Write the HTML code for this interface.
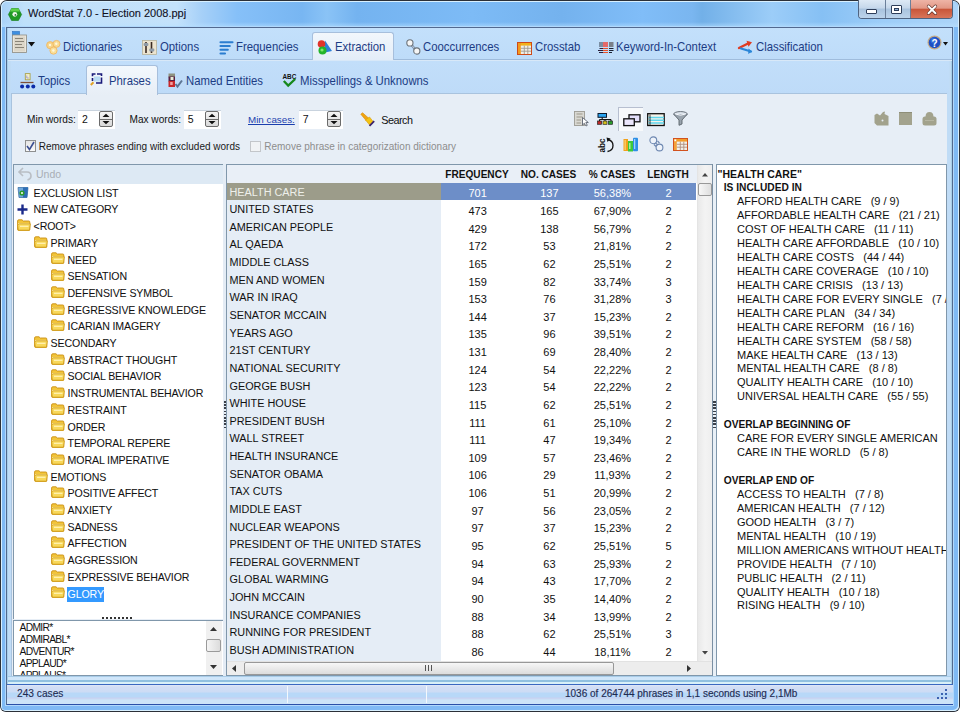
<!DOCTYPE html><html><head><meta charset="utf-8"><style>
*{box-sizing:border-box;margin:0;padding:0}
html,body{width:960px;height:712px;overflow:hidden;background:#fff}
body{position:relative;font-family:"Liberation Sans",sans-serif;}
.a{position:absolute}
.t{position:absolute;white-space:nowrap;line-height:1}
svg{position:absolute;overflow:visible}
</style></head><body>

<div class="a" style="left:0;top:0;width:960px;height:712px;background:#2b3038;border-radius:7px 7px 6px 6px"></div>
<div class="a" style="left:1px;top:1px;width:958px;height:710px;background:#7fbaf5;border-radius:6px 6px 5px 5px;box-shadow:inset 1px 1px 0 #d8f0ff, inset -1px -1px 0 #d8f0ff"></div>
<div class="a" style="left:2px;top:2px;width:956px;height:25px;border-radius:5px 5px 0 0;background:linear-gradient(90deg,#a9d2f8 0px,#bfe0fa 22px,#c4e2fb 175px,#a6d0f8 200px,#86c0f8 235px,#78b6f2 300px,#8ac3f6 325px,#74b3f0 355px,#7dbbf6 470px,#74b2ee 560px,#80bdf8 640px,#7ab6f0 690px,#72b0e8 700px,#9ccdf8 770px,#86c0f4 820px,#9dcdf8 880px,#acd4f8 956px)"></div>
<div class="a" style="left:2px;top:22px;width:956px;height:5px;background:linear-gradient(rgba(180,222,255,0),rgba(185,225,255,0.6))"></div>
<svg style="left:8px;top:7.5px" width="14" height="13" viewBox="0 0 14 13"><polygon points="3.6,0.5 10.4,0.5 13.6,6.5 10.4,12.5 3.6,12.5 0.4,6.5" fill="#1f9a24" stroke="#167a1a" stroke-width="0.6"/><polygon points="3.6,0.5 10.4,0.5 12,3.5 2,3.5" fill="#5fd04a"/><circle cx="6.8" cy="6.3" r="2.4" fill="#eef8e8"/><circle cx="7.4" cy="6.9" r="0.9" fill="#2a6a3a"/></svg>
<div class="t" style="left:28px;top:8px;font-size:11px;color:#10101e;-webkit-text-stroke:0.1px #10101e">WordStat 7.0 - Election 2008.ppj</div>
<div class="a" style="left:858px;top:0;width:95px;height:19px;border:1px solid #4f6380;border-top:none;border-radius:0 0 4px 4px;overflow:hidden;background:#c9dcef"><div class="a" style="left:0;top:0;width:26px;height:18px;background:linear-gradient(#dde9f5,#c5d7ea 45%,#a9c3de 50%,#bcd3ea)"></div><div class="a" style="left:26px;top:0;width:1px;height:18px;background:#6b7f9a"></div><div class="a" style="left:27px;top:0;width:24px;height:18px;background:linear-gradient(#dde9f5,#c5d7ea 45%,#a9c3de 50%,#bcd3ea)"></div><div class="a" style="left:51px;top:0;width:1px;height:18px;background:#6b7f9a"></div><div class="a" style="left:52px;top:0;width:43px;height:18px;background:linear-gradient(#eeb4a6,#e29886 45%,#c9563a 52%,#d8755a)"></div></div>
<div class="a" style="left:866px;top:9px;width:11px;height:5px;background:#fff;border:1px solid #2e3e5a;border-radius:1px"></div>
<div class="a" style="left:891px;top:5px;width:11px;height:9px;background:#fff;border:1px solid #2e3e5a;border-radius:1px"></div>
<div class="a" style="left:894px;top:8px;width:5px;height:3px;background:#8fb0d8;border:1px solid #2e3e5a"></div>
<svg style="left:926.5px;top:4.5px" width="10" height="9.5" viewBox="0 0 10 9.5"><path d="M1.5 1.2 L8.5 8.3 M8.5 1.2 L1.5 8.3" stroke="#5a2a22" stroke-width="3.2" stroke-linecap="round"/><path d="M1.5 1.2 L8.5 8.3 M8.5 1.2 L1.5 8.3" stroke="#fff" stroke-width="2" stroke-linecap="round"/></svg>
<div class="a" style="left:6px;top:27px;width:947px;height:678px;background:#c0dcf6;border:1px solid #52698f;border-bottom:none;box-shadow:0 0 0 1px #b0d8fc"></div>
<div class="a" style="left:7px;top:28px;width:1px;height:677px;background:#a6cfe8"></div>
<div class="a" style="left:951px;top:28px;width:1px;height:677px;background:#a6cfe8"></div>
<div class="a" style="left:8px;top:676px;width:943px;height:8px;background:linear-gradient(#a8cce8 0,#a8cce8 1px,#d0e6fa 1px,#d0e6fa 4px,#90c0e0 4px,#90c0e0 6px,#d8f0f8 6px)"></div>
<div class="a" style="left:8px;top:28px;width:944px;height:31px;background:linear-gradient(#c3e0fb,#bedcf9)"></div>
<div class="a" style="left:8px;top:59px;width:944px;height:1px;background:#9fbcdc"></div>
<div class="a" style="left:8px;top:60px;width:944px;height:1px;background:#d8e8f8"></div>
<div class="a" style="left:11px;top:61px;width:938px;height:33px;background:linear-gradient(#c2defa,#bedbf8)"></div>
<div class="a" style="left:11px;top:93px;width:936px;height:583px;background:#e7eef6;border-left:1px solid #a9c3de;border-top:1px solid #a9c3de"></div>
<div class="a" style="left:312px;top:32px;width:82px;height:28px;background:linear-gradient(#f2f7fc,#e3edf8);border:1px solid #a7bfdc;border-bottom:none;border-radius:3px 3px 0 0"></div>
<div class="t" style="left:63.3px;top:40.6px;font-size:12.4px;color:#1c3c84;transform:scaleX(0.915);transform-origin:0 0">Dictionaries</div>
<div class="t" style="left:159.8px;top:40.6px;font-size:12.4px;color:#1c3c84;transform:scaleX(0.915);transform-origin:0 0">Options</div>
<div class="t" style="left:236.3px;top:40.6px;font-size:12.4px;color:#1c3c84;transform:scaleX(0.915);transform-origin:0 0">Frequencies</div>
<div class="t" style="left:334.8px;top:40.6px;font-size:12.4px;color:#1c3c84;transform:scaleX(0.915);transform-origin:0 0">Extraction</div>
<div class="t" style="left:423.3px;top:40.6px;font-size:12.4px;color:#1c3c84;transform:scaleX(0.915);transform-origin:0 0">Cooccurrences</div>
<div class="t" style="left:534.55px;top:40.6px;font-size:12.4px;color:#1c3c84;transform:scaleX(0.915);transform-origin:0 0">Crosstab</div>
<div class="t" style="left:616.3px;top:40.6px;font-size:12.4px;color:#1c3c84;transform:scaleX(0.915);transform-origin:0 0">Keyword-In-Context</div>
<div class="t" style="left:755.8px;top:40.6px;font-size:12.4px;color:#1c3c84;transform:scaleX(0.915);transform-origin:0 0">Classification</div>
<div class="a" style="left:86px;top:65px;width:72px;height:30px;background:linear-gradient(#f3f8fd,#e7eef6);border:1px solid #a7bfdc;border-bottom:none;border-radius:3px 3px 0 0"></div>
<div class="t" style="left:37.75px;top:74.6px;font-size:12.4px;color:#1c3c84;transform:scaleX(0.915);transform-origin:0 0">Topics</div>
<div class="t" style="left:108.5px;top:74.6px;font-size:12.4px;color:#1c3c84;transform:scaleX(0.915);transform-origin:0 0">Phrases</div>
<div class="t" style="left:185.5px;top:74.6px;font-size:12.4px;color:#1c3c84;transform:scaleX(0.915);transform-origin:0 0">Named Entities</div>
<div class="t" style="left:300px;top:74.6px;font-size:12.4px;color:#1c3c84;transform:scaleX(0.915);transform-origin:0 0">Misspellings &amp; Unknowns</div>
<svg style="left:12px;top:31px" width="16" height="22" viewBox="0 0 16 22"><rect x="0.5" y="0.5" width="7" height="4" fill="#3d8fe0" stroke="#2a6fbf" stroke-width="0.6"/><rect x="0.5" y="4" width="14" height="17.5" fill="#ebe6dc" stroke="#8d8a80" stroke-width="0.8"/><rect x="2" y="5.5" width="11" height="15" fill="#dcd6c8"/><path d="M3 7.5 H11 M3 10.5 H12 M3 13.5 H10 M3 16.5 H12" stroke="#8a8477" stroke-width="1"/></svg>
<svg style="left:28px;top:42px" width="7" height="5" viewBox="0 0 7 5"><path d="M0 0 H7 L3.5 4.5Z" fill="#111"/></svg>
<svg style="left:46px;top:40px" width="15" height="15" viewBox="0 0 15 15"><circle cx="4.2" cy="5.2" r="3.6" fill="#f6d488" stroke="#f1b45c" stroke-width="0.8"/><circle cx="10.5" cy="3.9" r="3.5" fill="#f8dc94" stroke="#f1b45c" stroke-width="0.8"/><circle cx="7.5" cy="10.6" r="3.6" fill="#f9e09a" stroke="#f1b45c" stroke-width="0.8"/><circle cx="4" cy="5" r="1.2" fill="#fff6dc"/><circle cx="10.3" cy="3.7" r="1.2" fill="#fff6dc"/><circle cx="7.4" cy="10.5" r="1.2" fill="#fff6dc"/></svg>
<svg style="left:142px;top:40px" width="15" height="15" viewBox="0 0 15 15"><rect x="0.5" y="0.5" width="14" height="14" fill="#ece4cf" stroke="#b9b39a" stroke-width="0.8"/><path d="M4 2 V13 M9.5 2 V13" stroke="#3a2a22" stroke-width="1.6"/><rect x="1.6" y="3" width="4.8" height="3" rx="1" fill="#8e9aa6"/><rect x="7.3" y="8.5" width="5" height="3" rx="1" fill="#8e9aa6"/></svg>
<svg style="left:220px;top:41px" width="14" height="14" viewBox="0 0 14 14"><path d="M0.5 1.2 H12.5 M0.5 5 H9.8 M0.5 8.8 H7.8 M0.5 12.5 H5" stroke="#2b7dd0" stroke-width="2.1" stroke-linecap="round"/></svg>
<svg style="left:317px;top:40px" width="16" height="15" viewBox="0 0 16 15"><path d="M8 0.5 L15 11 L8 12.5Z" fill="#2a7fd8"/><path d="M8 0.5 L8 12.5 L5.5 11Z" fill="#5fb0f0"/><circle cx="4.5" cy="4" r="3.8" fill="#e0342a"/><circle cx="5.5" cy="10.5" r="4" fill="#22b42a"/><circle cx="5" cy="10" r="1.6" fill="#7cea6a"/></svg>
<svg style="left:406px;top:39px" width="14" height="16" viewBox="0 0 14 16"><path d="M4 4 L10.5 12" stroke="#7d8fa6" stroke-width="2.4"/><path d="M4 4 L10.5 12" stroke="#c9d8e8" stroke-width="0.8"/><circle cx="3.9" cy="3.9" r="3.1" fill="#f6f6f6" stroke="#6c737a" stroke-width="1.1"/><circle cx="10.8" cy="12" r="3.1" fill="#f6f6f6" stroke="#6c737a" stroke-width="1.1"/></svg>
<svg style="left:517px;top:41.5px" width="15" height="13" viewBox="0 0 15 13"><rect x="0.5" y="0.5" width="14" height="12" fill="#f0efe8" stroke="#cf4a18" stroke-width="1"/><rect x="1" y="1" width="13" height="2.6" fill="#f3b21a"/><rect x="1" y="1" width="2.8" height="11" fill="#f39a1c"/><path d="M3.8 6.3 H14 M3.8 9.2 H14 M7.3 3.6 V12 M10.8 3.6 V12" stroke="#a39a90" stroke-width="0.9"/></svg>
<svg style="left:598px;top:42px" width="16" height="12" viewBox="0 0 16 12"><rect x="1" y="0" width="4" height="5" fill="#7b8ea3"/><rect x="5" y="0" width="5" height="5" fill="#e46a6a"/><rect x="11" y="0" width="4.5" height="5" fill="#7a8089"/><path d="M1.5 6.5 H5 M0 8.5 H5 M1 10.5 H5" stroke="#2a1f3a" stroke-width="1.1"/><path d="M5 6.5 H10 M5 8.5 H10 M5 10.5 H10" stroke="#e8522c" stroke-width="1.1"/><path d="M11 6.5 H15.5 M11 8.5 H15.5 M11 10.5 H14" stroke="#1c2233" stroke-width="1.1"/></svg>
<svg style="left:738px;top:40px" width="15" height="15" viewBox="0 0 15 15"><path d="M1 8 L11 3" stroke="#e03c22" stroke-width="2.4" stroke-linecap="round"/><path d="M8.5 0.8 L14 2.2 L10.5 6.8Z" fill="#e03c22"/><path d="M3 8.5 L13 11.5" stroke="#2a86d8" stroke-width="2.2" stroke-linecap="round"/><path d="M10.5 8.5 L14.2 11.6 L10.2 14Z" fill="#2a86d8"/></svg>
<svg style="left:926.5px;top:35px" width="15" height="15" viewBox="0 0 15 15"><circle cx="7.5" cy="7.5" r="7" fill="#c4aa86"/><circle cx="7.5" cy="7.5" r="5.8" fill="#1e4fc4"/><circle cx="6.5" cy="5.5" r="3" fill="#3f7ee8" opacity="0.6"/><text x="7.5" y="11.5" font-family="Liberation Sans" font-weight="bold" font-size="10" fill="#fff" text-anchor="middle">?</text></svg>
<svg style="left:943px;top:41.5px" width="5" height="3.5" viewBox="0 0 5 3.5"><path d="M0 0 H5 L2.5 3.5Z" fill="#111"/></svg>
<svg style="left:20px;top:72.5px" width="16" height="16" viewBox="0 0 16 16"><rect x="5.3" y="0.6" width="4.8" height="6.2" fill="#f3efc9" stroke="#aaa24e" stroke-width="0.9"/><path d="M6.8 2.5 V5 H8.8" stroke="#8f8bd8" stroke-width="0.8" fill="none"/><path d="M0.5 9.5 H13.5" stroke="#7d4f36" stroke-width="1.3"/><circle cx="2.1" cy="13.6" r="2" fill="#0b2aa8"/><circle cx="7.8" cy="13.6" r="2" fill="#0b2aa8"/><circle cx="13.3" cy="13.6" r="2" fill="#0b2aa8"/></svg>
<svg style="left:90px;top:73px" width="13" height="13" viewBox="0 0 13 13"><path d="M2.5 3.2 V1 H5.5 M7 1 H11.5 V3 M11.5 4.5 V10 H6 M2.5 5 V8" stroke="#1a1a7a" stroke-width="1.6" fill="none"/><rect x="4" y="3.5" width="6" height="5" fill="#b9dcf4"/><path d="M0.8 12 L3.5 9.3" stroke="#e2a328" stroke-width="2"/></svg>
<svg style="left:168px;top:73px" width="15" height="15" viewBox="0 0 15 15"><rect x="0.5" y="0.5" width="6.5" height="4" fill="#8e9280"/><rect x="0.5" y="3.5" width="6.5" height="5" fill="#5a2040"/><rect x="2.5" y="4" width="3" height="3" fill="#e8eed8"/><rect x="0.5" y="8" width="6.5" height="6" fill="#c8282a"/><rect x="2.2" y="9" width="2.5" height="3" fill="#f3a0a0"/><path d="M7.5 11 L9.5 13.5 L14 7.5" stroke="#5e7694" stroke-width="2" fill="none"/></svg>
<svg style="left:282px;top:73px" width="15" height="15" viewBox="0 0 15 15"><text x="0.5" y="6.3" font-family="Liberation Sans" font-weight="bold" font-size="6.4" fill="#111">ABC</text><path d="M1.8 8 L6.2 12.6 L13.2 6" stroke="#16881c" stroke-width="2.3" fill="none"/></svg>
<div class="t" style="left:27px;top:114.9px;font-size:10.1px;color:#111">Min words:</div>
<div class="t" style="left:129.5px;top:114.9px;font-size:10.1px;color:#111">Max words:</div>
<div class="t" style="left:248px;top:114.9px;font-size:9.8px;color:#1b3fae;text-decoration:underline">Min cases:</div>
<div class="a" style="left:78px;top:109.5px;width:37px;height:19px;background:#fff;border-top:1px solid #c9d3de"></div>
<div class="t" style="left:82px;top:114px;font-size:10.5px;color:#111">2</div>
<div class="a" style="left:99px;top:111px;width:14px;height:16px;background:linear-gradient(#f4f4f4,#d9d9d9);border:1px solid #6b6b6b;border-radius:2px"></div>
<div class="a" style="left:100px;top:118.5px;width:12px;height:1px;background:#6b6b6b"></div>
<svg style="left:102px;top:113px" width="8" height="12" viewBox="0 0 8 12"><path d="M0.5 4 L4 0.8 L7.5 4Z M0.5 8 L4 11.2 L7.5 8Z" fill="#111"/></svg>
<div class="a" style="left:183.75px;top:109.5px;width:37.5px;height:19px;background:#fff;border-top:1px solid #c9d3de"></div>
<div class="t" style="left:187.75px;top:114px;font-size:10.5px;color:#111">5</div>
<div class="a" style="left:205.25px;top:111px;width:14px;height:16px;background:linear-gradient(#f4f4f4,#d9d9d9);border:1px solid #6b6b6b;border-radius:2px"></div>
<div class="a" style="left:206.25px;top:118.5px;width:12px;height:1px;background:#6b6b6b"></div>
<svg style="left:208.25px;top:113px" width="8" height="12" viewBox="0 0 8 12"><path d="M0.5 4 L4 0.8 L7.5 4Z M0.5 8 L4 11.2 L7.5 8Z" fill="#111"/></svg>
<div class="a" style="left:298.75px;top:109.5px;width:44.25px;height:19px;background:#fff;border-top:1px solid #c9d3de"></div>
<div class="t" style="left:302.75px;top:114px;font-size:10.5px;color:#111">7</div>
<div class="a" style="left:327.0px;top:111px;width:14px;height:16px;background:linear-gradient(#f4f4f4,#d9d9d9);border:1px solid #6b6b6b;border-radius:2px"></div>
<div class="a" style="left:328.0px;top:118.5px;width:12px;height:1px;background:#6b6b6b"></div>
<svg style="left:330.0px;top:113px" width="8" height="12" viewBox="0 0 8 12"><path d="M0.5 4 L4 0.8 L7.5 4Z M0.5 8 L4 11.2 L7.5 8Z" fill="#111"/></svg>
<svg style="left:360px;top:111.5px" width="16" height="15" viewBox="0 0 16 15"><path d="M0.8 2.2 L2.6 0.8 L9 6.5 L6.5 9Z" fill="#f0a512" stroke="#d98a08" stroke-width="0.6"/><path d="M5.5 8 L9.5 5 L13.5 10 L10 13.5Z" fill="#f3c414" stroke="#d99a10" stroke-width="0.6"/><path d="M9.5 13.8 L14.2 9.2" stroke="#3a2270" stroke-width="1.8"/></svg>
<div class="t" style="left:381.25px;top:114.6px;font-size:10.8px;letter-spacing:-0.5px;color:#111">Search</div>
<div class="a" style="left:24.5px;top:140px;width:11px;height:12px;background:linear-gradient(#e4e4e4,#fbfbfb);border:1px solid #8e8f8f"></div>
<svg style="left:26px;top:141px" width="9" height="10" viewBox="0 0 9 10"><path d="M1 5 L3.5 8.5 L8 1" stroke="#3b4f92" stroke-width="1.6" fill="none"/></svg>
<div class="t" style="left:38.75px;top:142px;font-size:10px;color:#1a1a1a">Remove phrases ending with excluded words</div>
<div class="a" style="left:250px;top:141px;width:11px;height:11px;background:#f1f3f5;border:1px solid #c3c6ca"></div>
<div class="t" style="left:264.25px;top:142px;font-size:10px;color:#8d8d8d">Remove phrase in categorization dictionary</div>
<svg style="left:573.5px;top:111px" width="16" height="15" viewBox="0 0 16 15"><rect x="0.5" y="0.5" width="10" height="14" fill="#d9d8d2" stroke="#9c9a92" stroke-width="0.9"/><path d="M2.5 3 H8.5 M2.5 6 H8.5 M2.5 9 H7 M2.5 12 H7" stroke="#9b978a" stroke-width="1"/><path d="M8.5 6.5 V14 L10.3 12.3 L12 15 L13.3 14.3 L11.8 11.6 L14.3 11.5Z" fill="#fff" stroke="#4a5260" stroke-width="0.8"/></svg>
<svg style="left:597px;top:113px" width="17" height="12" viewBox="0 0 17 12"><rect x="1" y="0.5" width="8.5" height="3.8" fill="#29a3f0" stroke="#0b1a2e" stroke-width="1"/><path d="M5.2 4.3 V6.5 M2.5 6.5 H14 M2.5 6.5 V8 M8 6.5 V8 M14 6.5 V8" stroke="#111" stroke-width="1.1" fill="none"/><rect x="0.6" y="8" width="4" height="3.3" fill="#c22a2a" stroke="#222" stroke-width="0.7"/><rect x="6" y="8" width="4" height="3.3" fill="#d8c21c" stroke="#222" stroke-width="0.7"/><rect x="11.5" y="8" width="4" height="3.3" fill="#2aa02a" stroke="#222" stroke-width="0.7"/></svg>
<div class="a" style="left:618px;top:106.5px;width:25px;height:24px;background:#f7f9fb;border-top:1.2px solid #b7bfd0;border-left:1.2px solid #b7bfd0"></div>
<svg style="left:622.5px;top:113.5px" width="18" height="12.5" viewBox="0 0 18 12.5"><rect x="6" y="0.8" width="11" height="7" fill="#e3defa" stroke="#111" stroke-width="1.3"/><rect x="0.8" y="4.8" width="10.5" height="6.8" fill="#ebe6fb" stroke="#111" stroke-width="1.3"/></svg>
<svg style="left:647px;top:113px" width="18" height="13" viewBox="0 0 18 13"><rect x="0.7" y="0.7" width="16.5" height="11.8" fill="#f5f3ea" stroke="#111" stroke-width="1.3"/><path d="M1.5 4.5 H17 M1.5 7.2 H17 M1.5 9.9 H17" stroke="#5fd6ee" stroke-width="1.5"/><path d="M3 1.5 V12" stroke="#111" stroke-width="0.8"/></svg>
<svg style="left:673px;top:111px" width="15" height="15" viewBox="0 0 15 15"><ellipse cx="7.5" cy="3" rx="6.8" ry="2.4" fill="#dfe6ee" stroke="#59626c" stroke-width="0.9"/><path d="M0.8 3.2 L6 9 V14.3 L9 13 V9 L14.2 3.2" fill="#9aa4ae" stroke="#5a626a" stroke-width="0.9"/><path d="M2.5 3 Q7.5 5.5 12.5 3" stroke="#f3f6fa" stroke-width="1" fill="none"/></svg>
<svg style="left:598px;top:136.5px" width="17" height="16" viewBox="0 0 17 16"><text transform="translate(7.3,15.5) rotate(-90)" font-family="Liberation Sans" font-weight="bold" font-size="8.2" fill="#111">abc</text><path d="M9.5 2.5 Q15 3.5 15 8.5 Q15 13.5 9.5 14.5" stroke="#111" stroke-width="1.3" fill="none"/><path d="M8.5 0.5 L12.5 1.5 L9.5 5Z" fill="#111"/></svg>
<svg style="left:622.5px;top:137px" width="16" height="15" viewBox="0 0 16 15"><rect x="0.5" y="2" width="4.5" height="12" fill="#f2a21a"/><rect x="1.5" y="3" width="1.3" height="10" fill="#fbd070"/><rect x="5" y="4" width="5" height="10.5" fill="#3ec83a"/><rect x="6" y="6" width="1.5" height="6" fill="#a6f09a"/><rect x="10" y="0.8" width="5" height="13.5" rx="1" fill="#2d8fe6"/><rect x="11" y="2" width="1.3" height="10" fill="#9fd3fa"/></svg>
<svg style="left:648.5px;top:136px" width="15" height="16" viewBox="0 0 15 16"><circle cx="4.3" cy="4.3" r="3.4" fill="#eef3fa" stroke="#6c86b0" stroke-width="1.1"/><circle cx="10.5" cy="11.5" r="3.4" fill="#eef3fa" stroke="#6c86b0" stroke-width="1.1"/><path d="M6.5 6.8 L9 9.2 M5 8.5 L7 10.5 M8.5 5 L10.5 7" stroke="#6c86b0" stroke-width="1.1"/></svg>
<svg style="left:673px;top:138px" width="15" height="13" viewBox="0 0 15 13"><rect x="0.5" y="0.5" width="14" height="12" fill="#f2f0ea" stroke="#d2521e" stroke-width="1"/><rect x="1" y="1" width="13" height="2.6" fill="#f39d2a"/><rect x="1" y="1" width="2.8" height="11" fill="#f3a23a"/><rect x="1.4" y="1.4" width="1.8" height="1.8" fill="#fff"/><path d="M3.8 6.3 H14 M3.8 9.2 H14 M7.3 3.6 V12 M10.8 3.6 V12" stroke="#b09080" stroke-width="0.9"/></svg>
<svg style="left:873.5px;top:110.5px" width="15" height="15" viewBox="0 0 15 15"><path d="M0.5 4 L3 2.5 L6 4.5 L9 1 L11 0.5 L10.5 3 L14.5 5 V14.5 H3 L0.5 12Z" fill="#a2a28c"/><circle cx="8.5" cy="9.5" r="1" fill="#e6ebf2"/></svg>
<div class="a" style="left:899px;top:112px;width:13px;height:13px;background:#a3a38e;border-top:1.5px solid #8e8e78"></div>
<svg style="left:922px;top:111px" width="15" height="15" viewBox="0 0 15 15"><path d="M3.5 6 Q3.5 1 7.5 1 Q11.5 1 11.5 6Z" fill="#a2a28c"/><rect x="0.5" y="5.5" width="14" height="9" rx="2.5" fill="#a2a28c"/><path d="M3 9.5 H12" stroke="#b6b6a2" stroke-width="1"/></svg>
<div class="a" style="left:13px;top:164px;width:211px;height:455px;background:#fff;border:1px solid #8097ab;border-bottom:none"></div>
<div class="a" style="left:14px;top:165px;width:209px;height:19px;background:#dde9f4"></div>
<svg style="left:18px;top:167px" width="15" height="14" viewBox="0 0 15 14"><path d="M5 1 L1 5 L5 9 M1.5 5 H9 Q13 5 13 9 Q13 12 9.5 13" stroke="#b9bec4" stroke-width="1.6" fill="none"/></svg>
<div class="t" style="left:36px;top:169px;font-size:10.5px;color:#a9aeb4">Undo</div>
<svg style="left:17px;top:186.2px" width="12" height="12" viewBox="0 0 12 12"><path d="M1 1.5 H11 L10 11.5 H2Z" fill="#6fa9dd" stroke="#3f73a8" stroke-width="0.8"/><path d="M6 1.5 H11 L10 11.5 H6Z" fill="#2f6fb6"/><circle cx="5" cy="7" r="2.6" fill="#2d9c2a"/><circle cx="5" cy="7" r="1" fill="#fff"/></svg>
<div class="t" style="left:33.6px;top:187.7px;font-size:10.6px;color:#111;letter-spacing:-0.12px;-webkit-text-stroke:0.05px #111">EXCLUSION LIST</div>
<svg style="left:17px;top:203.89999999999998px" width="11" height="11" viewBox="0 0 11 11"><path d="M5.5 0.5 V10.5 M0.5 5.5 H10.5" stroke="#1b2a8a" stroke-width="2.4"/></svg>
<div class="t" style="left:33.6px;top:204.39999999999998px;font-size:10.6px;color:#111;letter-spacing:-0.12px;-webkit-text-stroke:0.05px #111">NEW CATEGORY</div>
<svg style="left:17.1px;top:219.0px" width="14" height="12" viewBox="0 0 14 12"><path d="M0.6 2 Q0.6 0.8 1.8 0.8 H5 L6.3 2 H11.8 Q12.8 2 12.8 3 V10.6 Q12.8 11.4 12 11.4 H1.6 Q0.6 11.4 0.6 10.4Z" fill="#f2c53a" stroke="#c98f12" stroke-width="0.9"/><path d="M1.2 4 H12.2 V6 H1.2Z" fill="#fff1b0"/><path d="M0.6 6 L2.2 4.8 H13.4 L12.4 11.2 H1.4Z" fill="#f8d85a" stroke="#cf9a1a" stroke-width="0.8"/><path d="M3 7.3 H11.5" stroke="#fff3b8" stroke-width="1.2"/></svg>
<div class="t" style="left:33.6px;top:221.1px;font-size:10.6px;color:#111;letter-spacing:-0.12px;-webkit-text-stroke:0.05px #111">&lt;ROOT&gt;</div>
<svg style="left:34.1px;top:235.7px" width="14" height="12" viewBox="0 0 14 12"><path d="M0.6 2 Q0.6 0.8 1.8 0.8 H5 L6.3 2 H11.8 Q12.8 2 12.8 3 V10.6 Q12.8 11.4 12 11.4 H1.6 Q0.6 11.4 0.6 10.4Z" fill="#f2c53a" stroke="#c98f12" stroke-width="0.9"/><path d="M1.2 4 H12.2 V6 H1.2Z" fill="#fff1b0"/><path d="M0.6 6 L2.2 4.8 H13.4 L12.4 11.2 H1.4Z" fill="#f8d85a" stroke="#cf9a1a" stroke-width="0.8"/><path d="M3 7.3 H11.5" stroke="#fff3b8" stroke-width="1.2"/></svg>
<div class="t" style="left:50.6px;top:237.79999999999998px;font-size:10.6px;color:#111;letter-spacing:-0.12px;-webkit-text-stroke:0.05px #111">PRIMARY</div>
<svg style="left:51.099999999999994px;top:252.4px" width="14" height="12" viewBox="0 0 14 12"><path d="M0.6 2 Q0.6 0.8 1.8 0.8 H5 L6.3 2 H11.8 Q12.8 2 12.8 3 V10.6 Q12.8 11.4 12 11.4 H1.6 Q0.6 11.4 0.6 10.4Z" fill="#f2c53a" stroke="#c98f12" stroke-width="0.9"/><path d="M1.2 4 H12.2 V6 H1.2Z" fill="#fff1b0"/><path d="M0.6 6 L2.2 4.8 H13.4 L12.4 11.2 H1.4Z" fill="#f8d85a" stroke="#cf9a1a" stroke-width="0.8"/><path d="M3 7.3 H11.5" stroke="#fff3b8" stroke-width="1.2"/></svg>
<div class="t" style="left:67.6px;top:254.5px;font-size:10.6px;color:#111;letter-spacing:-0.12px;-webkit-text-stroke:0.05px #111">NEED</div>
<svg style="left:51.099999999999994px;top:269.09999999999997px" width="14" height="12" viewBox="0 0 14 12"><path d="M0.6 2 Q0.6 0.8 1.8 0.8 H5 L6.3 2 H11.8 Q12.8 2 12.8 3 V10.6 Q12.8 11.4 12 11.4 H1.6 Q0.6 11.4 0.6 10.4Z" fill="#f2c53a" stroke="#c98f12" stroke-width="0.9"/><path d="M1.2 4 H12.2 V6 H1.2Z" fill="#fff1b0"/><path d="M0.6 6 L2.2 4.8 H13.4 L12.4 11.2 H1.4Z" fill="#f8d85a" stroke="#cf9a1a" stroke-width="0.8"/><path d="M3 7.3 H11.5" stroke="#fff3b8" stroke-width="1.2"/></svg>
<div class="t" style="left:67.6px;top:271.2px;font-size:10.6px;color:#111;letter-spacing:-0.12px;-webkit-text-stroke:0.05px #111">SENSATION</div>
<svg style="left:51.099999999999994px;top:285.79999999999995px" width="14" height="12" viewBox="0 0 14 12"><path d="M0.6 2 Q0.6 0.8 1.8 0.8 H5 L6.3 2 H11.8 Q12.8 2 12.8 3 V10.6 Q12.8 11.4 12 11.4 H1.6 Q0.6 11.4 0.6 10.4Z" fill="#f2c53a" stroke="#c98f12" stroke-width="0.9"/><path d="M1.2 4 H12.2 V6 H1.2Z" fill="#fff1b0"/><path d="M0.6 6 L2.2 4.8 H13.4 L12.4 11.2 H1.4Z" fill="#f8d85a" stroke="#cf9a1a" stroke-width="0.8"/><path d="M3 7.3 H11.5" stroke="#fff3b8" stroke-width="1.2"/></svg>
<div class="t" style="left:67.6px;top:287.9px;font-size:10.6px;color:#111;letter-spacing:-0.12px;-webkit-text-stroke:0.05px #111">DEFENSIVE SYMBOL</div>
<svg style="left:51.099999999999994px;top:302.49999999999994px" width="14" height="12" viewBox="0 0 14 12"><path d="M0.6 2 Q0.6 0.8 1.8 0.8 H5 L6.3 2 H11.8 Q12.8 2 12.8 3 V10.6 Q12.8 11.4 12 11.4 H1.6 Q0.6 11.4 0.6 10.4Z" fill="#f2c53a" stroke="#c98f12" stroke-width="0.9"/><path d="M1.2 4 H12.2 V6 H1.2Z" fill="#fff1b0"/><path d="M0.6 6 L2.2 4.8 H13.4 L12.4 11.2 H1.4Z" fill="#f8d85a" stroke="#cf9a1a" stroke-width="0.8"/><path d="M3 7.3 H11.5" stroke="#fff3b8" stroke-width="1.2"/></svg>
<div class="t" style="left:67.6px;top:304.59999999999997px;font-size:10.6px;color:#111;letter-spacing:-0.12px;-webkit-text-stroke:0.05px #111">REGRESSIVE KNOWLEDGE</div>
<svg style="left:51.099999999999994px;top:319.19999999999993px" width="14" height="12" viewBox="0 0 14 12"><path d="M0.6 2 Q0.6 0.8 1.8 0.8 H5 L6.3 2 H11.8 Q12.8 2 12.8 3 V10.6 Q12.8 11.4 12 11.4 H1.6 Q0.6 11.4 0.6 10.4Z" fill="#f2c53a" stroke="#c98f12" stroke-width="0.9"/><path d="M1.2 4 H12.2 V6 H1.2Z" fill="#fff1b0"/><path d="M0.6 6 L2.2 4.8 H13.4 L12.4 11.2 H1.4Z" fill="#f8d85a" stroke="#cf9a1a" stroke-width="0.8"/><path d="M3 7.3 H11.5" stroke="#fff3b8" stroke-width="1.2"/></svg>
<div class="t" style="left:67.6px;top:321.29999999999995px;font-size:10.6px;color:#111;letter-spacing:-0.12px;-webkit-text-stroke:0.05px #111">ICARIAN IMAGERY</div>
<svg style="left:34.1px;top:335.9px" width="14" height="12" viewBox="0 0 14 12"><path d="M0.6 2 Q0.6 0.8 1.8 0.8 H5 L6.3 2 H11.8 Q12.8 2 12.8 3 V10.6 Q12.8 11.4 12 11.4 H1.6 Q0.6 11.4 0.6 10.4Z" fill="#f2c53a" stroke="#c98f12" stroke-width="0.9"/><path d="M1.2 4 H12.2 V6 H1.2Z" fill="#fff1b0"/><path d="M0.6 6 L2.2 4.8 H13.4 L12.4 11.2 H1.4Z" fill="#f8d85a" stroke="#cf9a1a" stroke-width="0.8"/><path d="M3 7.3 H11.5" stroke="#fff3b8" stroke-width="1.2"/></svg>
<div class="t" style="left:50.6px;top:338.0px;font-size:10.6px;color:#111;letter-spacing:-0.12px;-webkit-text-stroke:0.05px #111">SECONDARY</div>
<svg style="left:51.099999999999994px;top:352.59999999999997px" width="14" height="12" viewBox="0 0 14 12"><path d="M0.6 2 Q0.6 0.8 1.8 0.8 H5 L6.3 2 H11.8 Q12.8 2 12.8 3 V10.6 Q12.8 11.4 12 11.4 H1.6 Q0.6 11.4 0.6 10.4Z" fill="#f2c53a" stroke="#c98f12" stroke-width="0.9"/><path d="M1.2 4 H12.2 V6 H1.2Z" fill="#fff1b0"/><path d="M0.6 6 L2.2 4.8 H13.4 L12.4 11.2 H1.4Z" fill="#f8d85a" stroke="#cf9a1a" stroke-width="0.8"/><path d="M3 7.3 H11.5" stroke="#fff3b8" stroke-width="1.2"/></svg>
<div class="t" style="left:67.6px;top:354.7px;font-size:10.6px;color:#111;letter-spacing:-0.12px;-webkit-text-stroke:0.05px #111">ABSTRACT THOUGHT</div>
<svg style="left:51.099999999999994px;top:369.29999999999995px" width="14" height="12" viewBox="0 0 14 12"><path d="M0.6 2 Q0.6 0.8 1.8 0.8 H5 L6.3 2 H11.8 Q12.8 2 12.8 3 V10.6 Q12.8 11.4 12 11.4 H1.6 Q0.6 11.4 0.6 10.4Z" fill="#f2c53a" stroke="#c98f12" stroke-width="0.9"/><path d="M1.2 4 H12.2 V6 H1.2Z" fill="#fff1b0"/><path d="M0.6 6 L2.2 4.8 H13.4 L12.4 11.2 H1.4Z" fill="#f8d85a" stroke="#cf9a1a" stroke-width="0.8"/><path d="M3 7.3 H11.5" stroke="#fff3b8" stroke-width="1.2"/></svg>
<div class="t" style="left:67.6px;top:371.4px;font-size:10.6px;color:#111;letter-spacing:-0.12px;-webkit-text-stroke:0.05px #111">SOCIAL BEHAVIOR</div>
<svg style="left:51.099999999999994px;top:385.99999999999994px" width="14" height="12" viewBox="0 0 14 12"><path d="M0.6 2 Q0.6 0.8 1.8 0.8 H5 L6.3 2 H11.8 Q12.8 2 12.8 3 V10.6 Q12.8 11.4 12 11.4 H1.6 Q0.6 11.4 0.6 10.4Z" fill="#f2c53a" stroke="#c98f12" stroke-width="0.9"/><path d="M1.2 4 H12.2 V6 H1.2Z" fill="#fff1b0"/><path d="M0.6 6 L2.2 4.8 H13.4 L12.4 11.2 H1.4Z" fill="#f8d85a" stroke="#cf9a1a" stroke-width="0.8"/><path d="M3 7.3 H11.5" stroke="#fff3b8" stroke-width="1.2"/></svg>
<div class="t" style="left:67.6px;top:388.09999999999997px;font-size:10.6px;color:#111;letter-spacing:-0.12px;-webkit-text-stroke:0.05px #111">INSTRUMENTAL BEHAVIOR</div>
<svg style="left:51.099999999999994px;top:402.69999999999993px" width="14" height="12" viewBox="0 0 14 12"><path d="M0.6 2 Q0.6 0.8 1.8 0.8 H5 L6.3 2 H11.8 Q12.8 2 12.8 3 V10.6 Q12.8 11.4 12 11.4 H1.6 Q0.6 11.4 0.6 10.4Z" fill="#f2c53a" stroke="#c98f12" stroke-width="0.9"/><path d="M1.2 4 H12.2 V6 H1.2Z" fill="#fff1b0"/><path d="M0.6 6 L2.2 4.8 H13.4 L12.4 11.2 H1.4Z" fill="#f8d85a" stroke="#cf9a1a" stroke-width="0.8"/><path d="M3 7.3 H11.5" stroke="#fff3b8" stroke-width="1.2"/></svg>
<div class="t" style="left:67.6px;top:404.79999999999995px;font-size:10.6px;color:#111;letter-spacing:-0.12px;-webkit-text-stroke:0.05px #111">RESTRAINT</div>
<svg style="left:51.099999999999994px;top:419.4px" width="14" height="12" viewBox="0 0 14 12"><path d="M0.6 2 Q0.6 0.8 1.8 0.8 H5 L6.3 2 H11.8 Q12.8 2 12.8 3 V10.6 Q12.8 11.4 12 11.4 H1.6 Q0.6 11.4 0.6 10.4Z" fill="#f2c53a" stroke="#c98f12" stroke-width="0.9"/><path d="M1.2 4 H12.2 V6 H1.2Z" fill="#fff1b0"/><path d="M0.6 6 L2.2 4.8 H13.4 L12.4 11.2 H1.4Z" fill="#f8d85a" stroke="#cf9a1a" stroke-width="0.8"/><path d="M3 7.3 H11.5" stroke="#fff3b8" stroke-width="1.2"/></svg>
<div class="t" style="left:67.6px;top:421.5px;font-size:10.6px;color:#111;letter-spacing:-0.12px;-webkit-text-stroke:0.05px #111">ORDER</div>
<svg style="left:51.099999999999994px;top:436.09999999999997px" width="14" height="12" viewBox="0 0 14 12"><path d="M0.6 2 Q0.6 0.8 1.8 0.8 H5 L6.3 2 H11.8 Q12.8 2 12.8 3 V10.6 Q12.8 11.4 12 11.4 H1.6 Q0.6 11.4 0.6 10.4Z" fill="#f2c53a" stroke="#c98f12" stroke-width="0.9"/><path d="M1.2 4 H12.2 V6 H1.2Z" fill="#fff1b0"/><path d="M0.6 6 L2.2 4.8 H13.4 L12.4 11.2 H1.4Z" fill="#f8d85a" stroke="#cf9a1a" stroke-width="0.8"/><path d="M3 7.3 H11.5" stroke="#fff3b8" stroke-width="1.2"/></svg>
<div class="t" style="left:67.6px;top:438.2px;font-size:10.6px;color:#111;letter-spacing:-0.12px;-webkit-text-stroke:0.05px #111">TEMPORAL REPERE</div>
<svg style="left:51.099999999999994px;top:452.79999999999995px" width="14" height="12" viewBox="0 0 14 12"><path d="M0.6 2 Q0.6 0.8 1.8 0.8 H5 L6.3 2 H11.8 Q12.8 2 12.8 3 V10.6 Q12.8 11.4 12 11.4 H1.6 Q0.6 11.4 0.6 10.4Z" fill="#f2c53a" stroke="#c98f12" stroke-width="0.9"/><path d="M1.2 4 H12.2 V6 H1.2Z" fill="#fff1b0"/><path d="M0.6 6 L2.2 4.8 H13.4 L12.4 11.2 H1.4Z" fill="#f8d85a" stroke="#cf9a1a" stroke-width="0.8"/><path d="M3 7.3 H11.5" stroke="#fff3b8" stroke-width="1.2"/></svg>
<div class="t" style="left:67.6px;top:454.9px;font-size:10.6px;color:#111;letter-spacing:-0.12px;-webkit-text-stroke:0.05px #111">MORAL IMPERATIVE</div>
<svg style="left:34.1px;top:469.49999999999994px" width="14" height="12" viewBox="0 0 14 12"><path d="M0.6 2 Q0.6 0.8 1.8 0.8 H5 L6.3 2 H11.8 Q12.8 2 12.8 3 V10.6 Q12.8 11.4 12 11.4 H1.6 Q0.6 11.4 0.6 10.4Z" fill="#f2c53a" stroke="#c98f12" stroke-width="0.9"/><path d="M1.2 4 H12.2 V6 H1.2Z" fill="#fff1b0"/><path d="M0.6 6 L2.2 4.8 H13.4 L12.4 11.2 H1.4Z" fill="#f8d85a" stroke="#cf9a1a" stroke-width="0.8"/><path d="M3 7.3 H11.5" stroke="#fff3b8" stroke-width="1.2"/></svg>
<div class="t" style="left:50.6px;top:471.59999999999997px;font-size:10.6px;color:#111;letter-spacing:-0.12px;-webkit-text-stroke:0.05px #111">EMOTIONS</div>
<svg style="left:51.099999999999994px;top:486.19999999999993px" width="14" height="12" viewBox="0 0 14 12"><path d="M0.6 2 Q0.6 0.8 1.8 0.8 H5 L6.3 2 H11.8 Q12.8 2 12.8 3 V10.6 Q12.8 11.4 12 11.4 H1.6 Q0.6 11.4 0.6 10.4Z" fill="#f2c53a" stroke="#c98f12" stroke-width="0.9"/><path d="M1.2 4 H12.2 V6 H1.2Z" fill="#fff1b0"/><path d="M0.6 6 L2.2 4.8 H13.4 L12.4 11.2 H1.4Z" fill="#f8d85a" stroke="#cf9a1a" stroke-width="0.8"/><path d="M3 7.3 H11.5" stroke="#fff3b8" stroke-width="1.2"/></svg>
<div class="t" style="left:67.6px;top:488.29999999999995px;font-size:10.6px;color:#111;letter-spacing:-0.12px;-webkit-text-stroke:0.05px #111">POSITIVE AFFECT</div>
<svg style="left:51.099999999999994px;top:502.9px" width="14" height="12" viewBox="0 0 14 12"><path d="M0.6 2 Q0.6 0.8 1.8 0.8 H5 L6.3 2 H11.8 Q12.8 2 12.8 3 V10.6 Q12.8 11.4 12 11.4 H1.6 Q0.6 11.4 0.6 10.4Z" fill="#f2c53a" stroke="#c98f12" stroke-width="0.9"/><path d="M1.2 4 H12.2 V6 H1.2Z" fill="#fff1b0"/><path d="M0.6 6 L2.2 4.8 H13.4 L12.4 11.2 H1.4Z" fill="#f8d85a" stroke="#cf9a1a" stroke-width="0.8"/><path d="M3 7.3 H11.5" stroke="#fff3b8" stroke-width="1.2"/></svg>
<div class="t" style="left:67.6px;top:505.0px;font-size:10.6px;color:#111;letter-spacing:-0.12px;-webkit-text-stroke:0.05px #111">ANXIETY</div>
<svg style="left:51.099999999999994px;top:519.6px" width="14" height="12" viewBox="0 0 14 12"><path d="M0.6 2 Q0.6 0.8 1.8 0.8 H5 L6.3 2 H11.8 Q12.8 2 12.8 3 V10.6 Q12.8 11.4 12 11.4 H1.6 Q0.6 11.4 0.6 10.4Z" fill="#f2c53a" stroke="#c98f12" stroke-width="0.9"/><path d="M1.2 4 H12.2 V6 H1.2Z" fill="#fff1b0"/><path d="M0.6 6 L2.2 4.8 H13.4 L12.4 11.2 H1.4Z" fill="#f8d85a" stroke="#cf9a1a" stroke-width="0.8"/><path d="M3 7.3 H11.5" stroke="#fff3b8" stroke-width="1.2"/></svg>
<div class="t" style="left:67.6px;top:521.7px;font-size:10.6px;color:#111;letter-spacing:-0.12px;-webkit-text-stroke:0.05px #111">SADNESS</div>
<svg style="left:51.099999999999994px;top:536.3px" width="14" height="12" viewBox="0 0 14 12"><path d="M0.6 2 Q0.6 0.8 1.8 0.8 H5 L6.3 2 H11.8 Q12.8 2 12.8 3 V10.6 Q12.8 11.4 12 11.4 H1.6 Q0.6 11.4 0.6 10.4Z" fill="#f2c53a" stroke="#c98f12" stroke-width="0.9"/><path d="M1.2 4 H12.2 V6 H1.2Z" fill="#fff1b0"/><path d="M0.6 6 L2.2 4.8 H13.4 L12.4 11.2 H1.4Z" fill="#f8d85a" stroke="#cf9a1a" stroke-width="0.8"/><path d="M3 7.3 H11.5" stroke="#fff3b8" stroke-width="1.2"/></svg>
<div class="t" style="left:67.6px;top:538.4px;font-size:10.6px;color:#111;letter-spacing:-0.12px;-webkit-text-stroke:0.05px #111">AFFECTION</div>
<svg style="left:51.099999999999994px;top:552.9999999999999px" width="14" height="12" viewBox="0 0 14 12"><path d="M0.6 2 Q0.6 0.8 1.8 0.8 H5 L6.3 2 H11.8 Q12.8 2 12.8 3 V10.6 Q12.8 11.4 12 11.4 H1.6 Q0.6 11.4 0.6 10.4Z" fill="#f2c53a" stroke="#c98f12" stroke-width="0.9"/><path d="M1.2 4 H12.2 V6 H1.2Z" fill="#fff1b0"/><path d="M0.6 6 L2.2 4.8 H13.4 L12.4 11.2 H1.4Z" fill="#f8d85a" stroke="#cf9a1a" stroke-width="0.8"/><path d="M3 7.3 H11.5" stroke="#fff3b8" stroke-width="1.2"/></svg>
<div class="t" style="left:67.6px;top:555.0999999999999px;font-size:10.6px;color:#111;letter-spacing:-0.12px;-webkit-text-stroke:0.05px #111">AGGRESSION</div>
<svg style="left:51.099999999999994px;top:569.6999999999999px" width="14" height="12" viewBox="0 0 14 12"><path d="M0.6 2 Q0.6 0.8 1.8 0.8 H5 L6.3 2 H11.8 Q12.8 2 12.8 3 V10.6 Q12.8 11.4 12 11.4 H1.6 Q0.6 11.4 0.6 10.4Z" fill="#f2c53a" stroke="#c98f12" stroke-width="0.9"/><path d="M1.2 4 H12.2 V6 H1.2Z" fill="#fff1b0"/><path d="M0.6 6 L2.2 4.8 H13.4 L12.4 11.2 H1.4Z" fill="#f8d85a" stroke="#cf9a1a" stroke-width="0.8"/><path d="M3 7.3 H11.5" stroke="#fff3b8" stroke-width="1.2"/></svg>
<div class="t" style="left:67.6px;top:571.8px;font-size:10.6px;color:#111;letter-spacing:-0.12px;-webkit-text-stroke:0.05px #111">EXPRESSIVE BEHAVIOR</div>
<svg style="left:51.099999999999994px;top:586.4px" width="14" height="12" viewBox="0 0 14 12"><path d="M0.6 2 Q0.6 0.8 1.8 0.8 H5 L6.3 2 H11.8 Q12.8 2 12.8 3 V10.6 Q12.8 11.4 12 11.4 H1.6 Q0.6 11.4 0.6 10.4Z" fill="#f2c53a" stroke="#c98f12" stroke-width="0.9"/><path d="M1.2 4 H12.2 V6 H1.2Z" fill="#fff1b0"/><path d="M0.6 6 L2.2 4.8 H13.4 L12.4 11.2 H1.4Z" fill="#f8d85a" stroke="#cf9a1a" stroke-width="0.8"/><path d="M3 7.3 H11.5" stroke="#fff3b8" stroke-width="1.2"/></svg>
<div class="a" style="left:67.1px;top:587.0px;width:37px;height:15px;background:#3399ff"></div>
<div class="t" style="left:67.6px;top:588.5px;font-size:10.6px;color:#fff;letter-spacing:-0.12px">GLORY</div>
<div class="a" style="left:102px;top:617px;width:32px;height:2px;background:repeating-linear-gradient(90deg,#333 0 2px,transparent 2px 4px)"></div>
<div class="a" style="left:13px;top:620px;width:211px;height:56px;background:#fff;border:1px solid #8097ab;overflow:hidden">
<div class="t" style="left:5.5px;top:1.8px;font-size:10.3px;letter-spacing:-0.7px;color:#111">ADMIR*</div>
<div class="t" style="left:5.5px;top:13.8px;font-size:10.3px;letter-spacing:-0.7px;color:#111">ADMIRABL*</div>
<div class="t" style="left:5.5px;top:25.8px;font-size:10.3px;letter-spacing:-0.7px;color:#111">ADVENTUR*</div>
<div class="t" style="left:5.5px;top:37.8px;font-size:10.3px;letter-spacing:-0.7px;color:#111">APPLAUD*</div>
<div class="t" style="left:5.5px;top:49.8px;font-size:10.3px;letter-spacing:-0.7px;color:#111">APPLAUS*</div>
</div>
<div class="a" style="left:206px;top:621px;width:16px;height:54px;background:#f0f0f0"></div>
<div class="a" style="left:206px;top:638.5px;width:15px;height:13px;background:linear-gradient(90deg,#f5f5f5,#dcdcdc);border:1px solid #9a9a9a;border-radius:2px"></div>
<svg style="left:210px;top:627px" width="7" height="4" viewBox="0 0 7 4"><path d="M0 4 L3.5 0 L7 4Z" fill="#333"/></svg>
<svg style="left:210px;top:665px" width="7" height="4" viewBox="0 0 7 4"><path d="M0 0 L3.5 4 L7 0Z" fill="#333"/></svg>
<div class="a" style="left:223px;top:164px;width:3px;height:512px;background:#e4ecf5"></div>
<div class="a" style="left:226px;top:164px;width:487px;height:512px;background:#fff;border:1px solid #8097ab"></div>
<div class="a" style="left:227px;top:165px;width:470px;height:18px;background:#e9eff7"></div>
<div class="a" style="left:227px;top:183px;width:214px;height:478px;background:#e5edf6"></div>
<div class="t" style="left:427px;width:100px;text-align:center;top:170px;font-size:10.1px;font-weight:bold;color:#111">FREQUENCY</div>
<div class="t" style="left:498.5px;width:100px;text-align:center;top:170px;font-size:10.1px;font-weight:bold;color:#111">NO. CASES</div>
<div class="t" style="left:562px;width:100px;text-align:center;top:170px;font-size:10.1px;font-weight:bold;color:#111">% CASES</div>
<div class="t" style="left:618px;width:100px;text-align:center;top:170px;font-size:10.1px;font-weight:bold;color:#111">LENGTH</div>
<div class="a" style="left:227px;top:183px;width:214px;height:17px;background:#9c9c8a"></div>
<div class="a" style="left:441px;top:183px;width:255px;height:17px;background:#6d8ec8"></div>
<div class="t" style="left:229.5px;top:186.6px;font-size:10.85px;color:#eef0ea">HEALTH CARE</div>
<div class="t" style="left:437.6px;width:80px;text-align:center;top:188.4px;font-size:11px;color:#fff">701</div>
<div class="t" style="left:509.4px;width:80px;text-align:center;top:188.4px;font-size:11px;color:#fff">137</div>
<div class="t" style="left:572.4px;width:80px;text-align:center;top:188.4px;font-size:11px;color:#fff">56,38%</div>
<div class="t" style="left:628.6px;width:80px;text-align:center;top:188.4px;font-size:11px;color:#fff">2</div>
<div class="t" style="left:229.5px;top:204.23px;font-size:10.85px;color:#111">UNITED STATES</div>
<div class="t" style="left:437.6px;width:80px;text-align:center;top:206.03px;font-size:11px;color:#111">473</div>
<div class="t" style="left:509.4px;width:80px;text-align:center;top:206.03px;font-size:11px;color:#111">165</div>
<div class="t" style="left:572.4px;width:80px;text-align:center;top:206.03px;font-size:11px;color:#111">67,90%</div>
<div class="t" style="left:628.6px;width:80px;text-align:center;top:206.03px;font-size:11px;color:#111">2</div>
<div class="t" style="left:229.5px;top:221.85999999999999px;font-size:10.85px;color:#111">AMERICAN PEOPLE</div>
<div class="t" style="left:437.6px;width:80px;text-align:center;top:223.66px;font-size:11px;color:#111">429</div>
<div class="t" style="left:509.4px;width:80px;text-align:center;top:223.66px;font-size:11px;color:#111">138</div>
<div class="t" style="left:572.4px;width:80px;text-align:center;top:223.66px;font-size:11px;color:#111">56,79%</div>
<div class="t" style="left:628.6px;width:80px;text-align:center;top:223.66px;font-size:11px;color:#111">2</div>
<div class="t" style="left:229.5px;top:239.48999999999998px;font-size:10.85px;color:#111">AL QAEDA</div>
<div class="t" style="left:437.6px;width:80px;text-align:center;top:241.29px;font-size:11px;color:#111">172</div>
<div class="t" style="left:509.4px;width:80px;text-align:center;top:241.29px;font-size:11px;color:#111">53</div>
<div class="t" style="left:572.4px;width:80px;text-align:center;top:241.29px;font-size:11px;color:#111">21,81%</div>
<div class="t" style="left:628.6px;width:80px;text-align:center;top:241.29px;font-size:11px;color:#111">2</div>
<div class="t" style="left:229.5px;top:257.12px;font-size:10.85px;color:#111">MIDDLE CLASS</div>
<div class="t" style="left:437.6px;width:80px;text-align:center;top:258.91999999999996px;font-size:11px;color:#111">165</div>
<div class="t" style="left:509.4px;width:80px;text-align:center;top:258.91999999999996px;font-size:11px;color:#111">62</div>
<div class="t" style="left:572.4px;width:80px;text-align:center;top:258.91999999999996px;font-size:11px;color:#111">25,51%</div>
<div class="t" style="left:628.6px;width:80px;text-align:center;top:258.91999999999996px;font-size:11px;color:#111">2</div>
<div class="t" style="left:229.5px;top:274.75px;font-size:10.85px;color:#111">MEN AND WOMEN</div>
<div class="t" style="left:437.6px;width:80px;text-align:center;top:276.54999999999995px;font-size:11px;color:#111">159</div>
<div class="t" style="left:509.4px;width:80px;text-align:center;top:276.54999999999995px;font-size:11px;color:#111">82</div>
<div class="t" style="left:572.4px;width:80px;text-align:center;top:276.54999999999995px;font-size:11px;color:#111">33,74%</div>
<div class="t" style="left:628.6px;width:80px;text-align:center;top:276.54999999999995px;font-size:11px;color:#111">3</div>
<div class="t" style="left:229.5px;top:292.38px;font-size:10.85px;color:#111">WAR IN IRAQ</div>
<div class="t" style="left:437.6px;width:80px;text-align:center;top:294.17999999999995px;font-size:11px;color:#111">153</div>
<div class="t" style="left:509.4px;width:80px;text-align:center;top:294.17999999999995px;font-size:11px;color:#111">76</div>
<div class="t" style="left:572.4px;width:80px;text-align:center;top:294.17999999999995px;font-size:11px;color:#111">31,28%</div>
<div class="t" style="left:628.6px;width:80px;text-align:center;top:294.17999999999995px;font-size:11px;color:#111">3</div>
<div class="t" style="left:229.5px;top:310.01px;font-size:10.85px;color:#111">SENATOR MCCAIN</div>
<div class="t" style="left:437.6px;width:80px;text-align:center;top:311.80999999999995px;font-size:11px;color:#111">144</div>
<div class="t" style="left:509.4px;width:80px;text-align:center;top:311.80999999999995px;font-size:11px;color:#111">37</div>
<div class="t" style="left:572.4px;width:80px;text-align:center;top:311.80999999999995px;font-size:11px;color:#111">15,23%</div>
<div class="t" style="left:628.6px;width:80px;text-align:center;top:311.80999999999995px;font-size:11px;color:#111">2</div>
<div class="t" style="left:229.5px;top:327.64px;font-size:10.85px;color:#111">YEARS AGO</div>
<div class="t" style="left:437.6px;width:80px;text-align:center;top:329.43999999999994px;font-size:11px;color:#111">135</div>
<div class="t" style="left:509.4px;width:80px;text-align:center;top:329.43999999999994px;font-size:11px;color:#111">96</div>
<div class="t" style="left:572.4px;width:80px;text-align:center;top:329.43999999999994px;font-size:11px;color:#111">39,51%</div>
<div class="t" style="left:628.6px;width:80px;text-align:center;top:329.43999999999994px;font-size:11px;color:#111">2</div>
<div class="t" style="left:229.5px;top:345.27px;font-size:10.85px;color:#111">21ST CENTURY</div>
<div class="t" style="left:437.6px;width:80px;text-align:center;top:347.06999999999994px;font-size:11px;color:#111">131</div>
<div class="t" style="left:509.4px;width:80px;text-align:center;top:347.06999999999994px;font-size:11px;color:#111">69</div>
<div class="t" style="left:572.4px;width:80px;text-align:center;top:347.06999999999994px;font-size:11px;color:#111">28,40%</div>
<div class="t" style="left:628.6px;width:80px;text-align:center;top:347.06999999999994px;font-size:11px;color:#111">2</div>
<div class="t" style="left:229.5px;top:362.9px;font-size:10.85px;color:#111">NATIONAL SECURITY</div>
<div class="t" style="left:437.6px;width:80px;text-align:center;top:364.69999999999993px;font-size:11px;color:#111">124</div>
<div class="t" style="left:509.4px;width:80px;text-align:center;top:364.69999999999993px;font-size:11px;color:#111">54</div>
<div class="t" style="left:572.4px;width:80px;text-align:center;top:364.69999999999993px;font-size:11px;color:#111">22,22%</div>
<div class="t" style="left:628.6px;width:80px;text-align:center;top:364.69999999999993px;font-size:11px;color:#111">2</div>
<div class="t" style="left:229.5px;top:380.53px;font-size:10.85px;color:#111">GEORGE BUSH</div>
<div class="t" style="left:437.6px;width:80px;text-align:center;top:382.3299999999999px;font-size:11px;color:#111">123</div>
<div class="t" style="left:509.4px;width:80px;text-align:center;top:382.3299999999999px;font-size:11px;color:#111">54</div>
<div class="t" style="left:572.4px;width:80px;text-align:center;top:382.3299999999999px;font-size:11px;color:#111">22,22%</div>
<div class="t" style="left:628.6px;width:80px;text-align:center;top:382.3299999999999px;font-size:11px;color:#111">2</div>
<div class="t" style="left:229.5px;top:398.16px;font-size:10.85px;color:#111">WHITE HOUSE</div>
<div class="t" style="left:437.6px;width:80px;text-align:center;top:399.96px;font-size:11px;color:#111">115</div>
<div class="t" style="left:509.4px;width:80px;text-align:center;top:399.96px;font-size:11px;color:#111">62</div>
<div class="t" style="left:572.4px;width:80px;text-align:center;top:399.96px;font-size:11px;color:#111">25,51%</div>
<div class="t" style="left:628.6px;width:80px;text-align:center;top:399.96px;font-size:11px;color:#111">2</div>
<div class="t" style="left:229.5px;top:415.79px;font-size:10.85px;color:#111">PRESIDENT BUSH</div>
<div class="t" style="left:437.6px;width:80px;text-align:center;top:417.59px;font-size:11px;color:#111">111</div>
<div class="t" style="left:509.4px;width:80px;text-align:center;top:417.59px;font-size:11px;color:#111">61</div>
<div class="t" style="left:572.4px;width:80px;text-align:center;top:417.59px;font-size:11px;color:#111">25,10%</div>
<div class="t" style="left:628.6px;width:80px;text-align:center;top:417.59px;font-size:11px;color:#111">2</div>
<div class="t" style="left:229.5px;top:433.42px;font-size:10.85px;color:#111">WALL STREET</div>
<div class="t" style="left:437.6px;width:80px;text-align:center;top:435.21999999999997px;font-size:11px;color:#111">111</div>
<div class="t" style="left:509.4px;width:80px;text-align:center;top:435.21999999999997px;font-size:11px;color:#111">47</div>
<div class="t" style="left:572.4px;width:80px;text-align:center;top:435.21999999999997px;font-size:11px;color:#111">19,34%</div>
<div class="t" style="left:628.6px;width:80px;text-align:center;top:435.21999999999997px;font-size:11px;color:#111">2</div>
<div class="t" style="left:229.5px;top:451.05px;font-size:10.85px;color:#111">HEALTH INSURANCE</div>
<div class="t" style="left:437.6px;width:80px;text-align:center;top:452.84999999999997px;font-size:11px;color:#111">109</div>
<div class="t" style="left:509.4px;width:80px;text-align:center;top:452.84999999999997px;font-size:11px;color:#111">57</div>
<div class="t" style="left:572.4px;width:80px;text-align:center;top:452.84999999999997px;font-size:11px;color:#111">23,46%</div>
<div class="t" style="left:628.6px;width:80px;text-align:center;top:452.84999999999997px;font-size:11px;color:#111">2</div>
<div class="t" style="left:229.5px;top:468.68px;font-size:10.85px;color:#111">SENATOR OBAMA</div>
<div class="t" style="left:437.6px;width:80px;text-align:center;top:470.47999999999996px;font-size:11px;color:#111">106</div>
<div class="t" style="left:509.4px;width:80px;text-align:center;top:470.47999999999996px;font-size:11px;color:#111">29</div>
<div class="t" style="left:572.4px;width:80px;text-align:center;top:470.47999999999996px;font-size:11px;color:#111">11,93%</div>
<div class="t" style="left:628.6px;width:80px;text-align:center;top:470.47999999999996px;font-size:11px;color:#111">2</div>
<div class="t" style="left:229.5px;top:486.31px;font-size:10.85px;color:#111">TAX CUTS</div>
<div class="t" style="left:437.6px;width:80px;text-align:center;top:488.10999999999996px;font-size:11px;color:#111">106</div>
<div class="t" style="left:509.4px;width:80px;text-align:center;top:488.10999999999996px;font-size:11px;color:#111">51</div>
<div class="t" style="left:572.4px;width:80px;text-align:center;top:488.10999999999996px;font-size:11px;color:#111">20,99%</div>
<div class="t" style="left:628.6px;width:80px;text-align:center;top:488.10999999999996px;font-size:11px;color:#111">2</div>
<div class="t" style="left:229.5px;top:503.94px;font-size:10.85px;color:#111">MIDDLE EAST</div>
<div class="t" style="left:437.6px;width:80px;text-align:center;top:505.73999999999995px;font-size:11px;color:#111">97</div>
<div class="t" style="left:509.4px;width:80px;text-align:center;top:505.73999999999995px;font-size:11px;color:#111">56</div>
<div class="t" style="left:572.4px;width:80px;text-align:center;top:505.73999999999995px;font-size:11px;color:#111">23,05%</div>
<div class="t" style="left:628.6px;width:80px;text-align:center;top:505.73999999999995px;font-size:11px;color:#111">2</div>
<div class="t" style="left:229.5px;top:521.57px;font-size:10.85px;color:#111">NUCLEAR WEAPONS</div>
<div class="t" style="left:437.6px;width:80px;text-align:center;top:523.37px;font-size:11px;color:#111">97</div>
<div class="t" style="left:509.4px;width:80px;text-align:center;top:523.37px;font-size:11px;color:#111">37</div>
<div class="t" style="left:572.4px;width:80px;text-align:center;top:523.37px;font-size:11px;color:#111">15,23%</div>
<div class="t" style="left:628.6px;width:80px;text-align:center;top:523.37px;font-size:11px;color:#111">2</div>
<div class="t" style="left:229.5px;top:539.1999999999999px;font-size:10.85px;color:#111">PRESIDENT OF THE UNITED STATES</div>
<div class="t" style="left:437.6px;width:80px;text-align:center;top:540.9999999999999px;font-size:11px;color:#111">95</div>
<div class="t" style="left:509.4px;width:80px;text-align:center;top:540.9999999999999px;font-size:11px;color:#111">62</div>
<div class="t" style="left:572.4px;width:80px;text-align:center;top:540.9999999999999px;font-size:11px;color:#111">25,51%</div>
<div class="t" style="left:628.6px;width:80px;text-align:center;top:540.9999999999999px;font-size:11px;color:#111">5</div>
<div class="t" style="left:229.5px;top:556.83px;font-size:10.85px;color:#111">FEDERAL GOVERNMENT</div>
<div class="t" style="left:437.6px;width:80px;text-align:center;top:558.63px;font-size:11px;color:#111">94</div>
<div class="t" style="left:509.4px;width:80px;text-align:center;top:558.63px;font-size:11px;color:#111">63</div>
<div class="t" style="left:572.4px;width:80px;text-align:center;top:558.63px;font-size:11px;color:#111">25,93%</div>
<div class="t" style="left:628.6px;width:80px;text-align:center;top:558.63px;font-size:11px;color:#111">2</div>
<div class="t" style="left:229.5px;top:574.4599999999999px;font-size:10.85px;color:#111">GLOBAL WARMING</div>
<div class="t" style="left:437.6px;width:80px;text-align:center;top:576.2599999999999px;font-size:11px;color:#111">94</div>
<div class="t" style="left:509.4px;width:80px;text-align:center;top:576.2599999999999px;font-size:11px;color:#111">43</div>
<div class="t" style="left:572.4px;width:80px;text-align:center;top:576.2599999999999px;font-size:11px;color:#111">17,70%</div>
<div class="t" style="left:628.6px;width:80px;text-align:center;top:576.2599999999999px;font-size:11px;color:#111">2</div>
<div class="t" style="left:229.5px;top:592.09px;font-size:10.85px;color:#111">JOHN MCCAIN</div>
<div class="t" style="left:437.6px;width:80px;text-align:center;top:593.89px;font-size:11px;color:#111">90</div>
<div class="t" style="left:509.4px;width:80px;text-align:center;top:593.89px;font-size:11px;color:#111">35</div>
<div class="t" style="left:572.4px;width:80px;text-align:center;top:593.89px;font-size:11px;color:#111">14,40%</div>
<div class="t" style="left:628.6px;width:80px;text-align:center;top:593.89px;font-size:11px;color:#111">2</div>
<div class="t" style="left:229.5px;top:609.72px;font-size:10.85px;color:#111">INSURANCE COMPANIES</div>
<div class="t" style="left:437.6px;width:80px;text-align:center;top:611.52px;font-size:11px;color:#111">88</div>
<div class="t" style="left:509.4px;width:80px;text-align:center;top:611.52px;font-size:11px;color:#111">34</div>
<div class="t" style="left:572.4px;width:80px;text-align:center;top:611.52px;font-size:11px;color:#111">13,99%</div>
<div class="t" style="left:628.6px;width:80px;text-align:center;top:611.52px;font-size:11px;color:#111">2</div>
<div class="t" style="left:229.5px;top:627.35px;font-size:10.85px;color:#111">RUNNING FOR PRESIDENT</div>
<div class="t" style="left:437.6px;width:80px;text-align:center;top:629.15px;font-size:11px;color:#111">88</div>
<div class="t" style="left:509.4px;width:80px;text-align:center;top:629.15px;font-size:11px;color:#111">62</div>
<div class="t" style="left:572.4px;width:80px;text-align:center;top:629.15px;font-size:11px;color:#111">25,51%</div>
<div class="t" style="left:628.6px;width:80px;text-align:center;top:629.15px;font-size:11px;color:#111">3</div>
<div class="t" style="left:229.5px;top:644.98px;font-size:10.85px;color:#111">BUSH ADMINISTRATION</div>
<div class="t" style="left:437.6px;width:80px;text-align:center;top:646.78px;font-size:11px;color:#111">86</div>
<div class="t" style="left:509.4px;width:80px;text-align:center;top:646.78px;font-size:11px;color:#111">44</div>
<div class="t" style="left:572.4px;width:80px;text-align:center;top:646.78px;font-size:11px;color:#111">18,11%</div>
<div class="t" style="left:628.6px;width:80px;text-align:center;top:646.78px;font-size:11px;color:#111">2</div>
<div class="a" style="left:697px;top:165px;width:15px;height:496px;background:linear-gradient(90deg,#e9e9e9,#f3f3f3 50%,#eeeeee);border-left:1px solid #e4e4e4"></div>
<svg style="left:701.5px;top:172.5px" width="6" height="3.5" viewBox="0 0 6 3.5"><path d="M0 3.5 L3 0 L6 3.5Z" fill="#444"/></svg>
<svg style="left:701.5px;top:650.5px" width="6" height="3.5" viewBox="0 0 6 3.5"><path d="M0 0 L3 3.5 L6 0Z" fill="#444"/></svg>
<div class="a" style="left:697.5px;top:182.7px;width:14px;height:13px;background:linear-gradient(90deg,#f7f7f7,#dedede);border:1px solid #989898;border-radius:2px"></div>
<div class="a" style="left:227px;top:661px;width:485px;height:14px;background:#ededed;border-top:1px solid #e2e2e2"></div>
<svg style="left:232px;top:665px" width="4" height="7" viewBox="0 0 4 7"><path d="M4 0 L0 3.5 L4 7Z" fill="#333"/></svg>
<svg style="left:687px;top:665px" width="4" height="7" viewBox="0 0 4 7"><path d="M0 0 L4 3.5 L0 7Z" fill="#333"/></svg>
<div class="a" style="left:244px;top:661.5px;width:370px;height:13.5px;background:linear-gradient(#f7f7f7,#dcdcdc);border:1px solid #989898;border-radius:2px"></div>
<div class="a" style="left:425px;top:665px;width:7px;height:6px;background:repeating-linear-gradient(90deg,#555 0 1px,transparent 1px 3px)"></div>
<div class="a" style="left:712px;top:164px;width:5px;height:512px;background:#e9f0f7;border-left:1px solid #7a8fa3;border-right:1px solid #7a8fa3"></div>
<div class="a" style="left:713px;top:401px;width:3px;height:29px;background:repeating-linear-gradient(#3a3f48 0 1.5px,transparent 1.5px 3.2px)"></div>
<div class="a" style="left:224px;top:401px;width:2px;height:29px;background:repeating-linear-gradient(#3a3f48 0 1.5px,transparent 1.5px 3.2px)"></div>
<div class="a" style="left:716px;top:164px;width:231px;height:512px;background:#fff;border:1px solid #8097ab;overflow:hidden"></div>
<div class="a" style="left:717px;top:165px;width:229px;height:510px;overflow:hidden">
<div class="t" style="left:0.5px;top:4.0px;font-size:10.5px;font-weight:bold;color:#111">"HEALTH CARE"</div>
<div class="t" style="left:6.75px;top:17.939999999999998px;font-size:10.2px;font-weight:bold;color:#111">IS INCLUDED IN</div>
<div class="t" style="left:20px;top:31.179999999999996px;font-size:11px;color:#111;white-space:pre">AFFORD HEALTH CARE   (9 / 9)</div>
<div class="t" style="left:20px;top:45.11999999999999px;font-size:11px;color:#111;white-space:pre">AFFORDABLE HEALTH CARE   (21 / 21)</div>
<div class="t" style="left:20px;top:59.05999999999999px;font-size:11px;color:#111;white-space:pre">COST OF HEALTH CARE   (11 / 11)</div>
<div class="t" style="left:20px;top:72.99999999999999px;font-size:11px;color:#111;white-space:pre">HEALTH CARE AFFORDABLE   (10 / 10)</div>
<div class="t" style="left:20px;top:86.93999999999998px;font-size:11px;color:#111;white-space:pre">HEALTH CARE COSTS   (44 / 44)</div>
<div class="t" style="left:20px;top:100.87999999999998px;font-size:11px;color:#111;white-space:pre">HEALTH CARE COVERAGE   (10 / 10)</div>
<div class="t" style="left:20px;top:114.81999999999998px;font-size:11px;color:#111;white-space:pre">HEALTH CARE CRISIS   (13 / 13)</div>
<div class="t" style="left:20px;top:128.76px;font-size:11px;color:#111;white-space:pre">HEALTH CARE FOR EVERY SINGLE   (7 / 7)</div>
<div class="t" style="left:20px;top:142.7px;font-size:11px;color:#111;white-space:pre">HEALTH CARE PLAN   (34 / 34)</div>
<div class="t" style="left:20px;top:156.64000000000004px;font-size:11px;color:#111;white-space:pre">HEALTH CARE REFORM   (16 / 16)</div>
<div class="t" style="left:20px;top:170.57999999999998px;font-size:11px;color:#111;white-space:pre">HEALTH CARE SYSTEM   (58 / 58)</div>
<div class="t" style="left:20px;top:184.52000000000004px;font-size:11px;color:#111;white-space:pre">MAKE HEALTH CARE   (13 / 13)</div>
<div class="t" style="left:20px;top:198.45999999999998px;font-size:11px;color:#111;white-space:pre">MENTAL HEALTH CARE   (8 / 8)</div>
<div class="t" style="left:20px;top:212.40000000000003px;font-size:11px;color:#111;white-space:pre">QUALITY HEALTH CARE   (10 / 10)</div>
<div class="t" style="left:20px;top:226.33999999999997px;font-size:11px;color:#111;white-space:pre">UNIVERSAL HEALTH CARE   (55 / 55)</div>
<div class="t" style="left:6.75px;top:254.91999999999996px;font-size:10.2px;font-weight:bold;color:#111">OVERLAP BEGINNING OF</div>
<div class="t" style="left:20px;top:268.16px;font-size:11px;color:#111;white-space:pre">CARE FOR EVERY SINGLE AMERICAN   (7 / 7)</div>
<div class="t" style="left:20px;top:282.1px;font-size:11px;color:#111;white-space:pre">CARE IN THE WORLD   (5 / 8)</div>
<div class="t" style="left:6.75px;top:310.68px;font-size:10.2px;font-weight:bold;color:#111">OVERLAP END OF</div>
<div class="t" style="left:20px;top:323.92px;font-size:11px;color:#111;white-space:pre">ACCESS TO HEALTH   (7 / 8)</div>
<div class="t" style="left:20px;top:337.85999999999996px;font-size:11px;color:#111;white-space:pre">AMERICAN HEALTH   (7 / 12)</div>
<div class="t" style="left:20px;top:351.8px;font-size:11px;color:#111;white-space:pre">GOOD HEALTH   (3 / 7)</div>
<div class="t" style="left:20px;top:365.74000000000007px;font-size:11px;color:#111;white-space:pre">MENTAL HEALTH   (10 / 19)</div>
<div class="t" style="left:20px;top:379.68px;font-size:11px;color:#111;white-space:pre">MILLION AMERICANS WITHOUT HEALTH   (7 / 7)</div>
<div class="t" style="left:20px;top:393.61999999999995px;font-size:11px;color:#111;white-space:pre">PROVIDE HEALTH   (7 / 10)</div>
<div class="t" style="left:20px;top:407.56px;font-size:11px;color:#111;white-space:pre">PUBLIC HEALTH   (2 / 11)</div>
<div class="t" style="left:20px;top:421.50000000000006px;font-size:11px;color:#111;white-space:pre">QUALITY HEALTH   (10 / 18)</div>
<div class="t" style="left:20px;top:435.44px;font-size:11px;color:#111;white-space:pre">RISING HEALTH   (9 / 10)</div>
</div>
<div class="a" style="left:7px;top:684px;width:946px;height:21px;background:linear-gradient(#e0e8f8 0,#d0ddf5 2px,#cddcf5 7px,#b8d8f8 8px,#b8d8f8 12px,#c8d0f0 13px,#cce4f8 15px);border-top:1px solid #3a68c0;border-bottom:1px solid #2a50a8"></div>
<div class="a" style="left:286.5px;top:686px;width:1px;height:17px;background:#f4f8fc"></div>
<div class="a" style="left:426px;top:686px;width:1px;height:17px;background:#f4f8fc"></div>
<div class="t" style="left:17px;top:689px;font-size:10.2px;color:#1f2b52;-webkit-text-stroke:0.1px #1f2b52">243 cases</div>
<div class="t" style="left:565px;top:689px;font-size:10px;color:#1f2b52;-webkit-text-stroke:0.15px #1f2b52">1036 of 264744 phrases in 1,1 seconds using 2,1Mb</div>
<div class="a" style="left:945px;top:689px;width:2px;height:2px;background:#3b62b0"></div>
<div class="a" style="left:941px;top:693px;width:2px;height:2px;background:#3b62b0"></div>
<div class="a" style="left:945px;top:693px;width:2px;height:2px;background:#3b62b0"></div>
<div class="a" style="left:937px;top:697px;width:2px;height:2px;background:#3b62b0"></div>
<div class="a" style="left:941px;top:697px;width:2px;height:2px;background:#3b62b0"></div>
<div class="a" style="left:945px;top:697px;width:2px;height:2px;background:#3b62b0"></div>
</body></html>
